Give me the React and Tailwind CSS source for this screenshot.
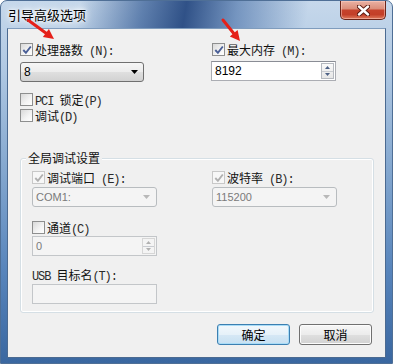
import React from "react";

function Lat({ children }) {
  return <span className="font-['Liberation_Mono',monospace] text-[12px] leading-[12px] tracking-[-1.1px] text-[#2a2a2a]">{children}</span>;
}

function Check({ checked, disabled }) {
  return (
    <span
      className={
        disabled
          ? "flex h-[13px] w-[13px] shrink-0 items-center justify-center border border-[#c8c8c8] bg-[#f7f7f7]"
          : "flex h-[13px] w-[13px] shrink-0 items-center justify-center border border-[#8e8f8f] bg-[linear-gradient(135deg,#d9d9d9_0%,#f4f4f4_60%,#ffffff_100%)]"
      }
    >
      {checked && (
        <svg width="10" height="10" viewBox="0 0 10 10">
          <path
            d="M1.3 5 L3.9 7.8 L8.8 1.5"
            fill="none"
            stroke={disabled ? "#b0b0b0" : "#4a5f97"}
            strokeWidth="1.9"
          />
        </svg>
      )}
    </span>
  );
}

function CheckRow({ checked, disabled, children }) {
  return (
    <div className="flex h-[13px] items-center gap-[2px] whitespace-nowrap">
      <Check checked={checked} disabled={disabled} />
      <span className="block h-[13px] font-['Noto_Sans_CJK_SC',sans-serif] text-[12px] leading-[13px] text-[#111]">
        {children}
      </span>
    </div>
  );
}

function Arrow({ disabled }) {
  return (
    <svg width="7" height="4" viewBox="0 0 7 4">
      <path d="M0 0 H7 L3.5 4 Z" fill={disabled ? "#b8b8b8" : "#000"} />
    </svg>
  );
}

function Combo({ value, disabled }) {
  return (
    <div
      className={
        disabled
          ? "flex h-[20px] w-[125px] items-center justify-between rounded-[3px] border border-[#b8bcbf] bg-[#f4f4f4] pl-[3px] pr-[6px]"
          : "flex h-[20px] w-[124px] items-center justify-between rounded-[3px] border border-[#707070] bg-[linear-gradient(180deg,#f6f6f6_0%,#ececec_50%,#dfdfdf_51%,#d2d2d2_100%)] pl-[3px] pr-[5px]"
      }
    >
      <span
        className={
          disabled
            ? "font-['Liberation_Sans',sans-serif] text-[11px] text-[#7a7a7a]"
            : "font-['Liberation_Sans',sans-serif] text-[12px] text-black"
        }
      >
        {value}
      </span>
      <Arrow disabled={disabled} />
    </div>
  );
}

function Spinner({ disabled }) {
  const c = disabled ? "#b0b0b0" : "#4d6185";
  return (
    <div
      className={
        disabled
          ? "flex h-[16px] w-[13px] flex-col border border-[#d6d6d6] bg-[#f4f4f4]"
          : "flex h-[16px] w-[13px] flex-col border border-[#b5b9bf] bg-[linear-gradient(180deg,#fafafa,#e6e6e6)]"
      }
    >
      <div className="flex flex-1 items-center justify-center border-b border-[#c9ccd1]">
        <svg width="5" height="3" viewBox="0 0 5 3">
          <path d="M0 3 H5 L2.5 0 Z" fill={c} />
        </svg>
      </div>
      <div className="flex flex-1 items-center justify-center">
        <svg width="5" height="3" viewBox="0 0 5 3">
          <path d="M0 0 H5 L2.5 3 Z" fill={c} />
        </svg>
      </div>
    </div>
  );
}

function SpinInput({ value, disabled }) {
  return (
    <div
      className={
        disabled
          ? "flex h-[20px] w-[125px] items-center justify-between border border-[#c3c6c9] bg-[#f4f4f4] pl-[3px] pr-[1px]"
          : "flex h-[20px] w-[125px] items-center justify-between border border-[#abadb3] border-t-[#8a8d95] bg-white pl-[3px] pr-[1px]"
      }
    >
      <span
        className={
          disabled
            ? "font-['Liberation_Sans',sans-serif] text-[11px] text-[#7a7a7a]"
            : "font-['Liberation_Sans',sans-serif] text-[12px] text-black"
        }
      >
        {value}
      </span>
      <Spinner disabled={disabled} />
    </div>
  );
}

function CloseX() {
  return (
    <svg width="13" height="11" viewBox="0 0 13 11">
      <path d="M2 1.5 L11 9.5 M11 1.5 L2 9.5" stroke="#5a1a10" strokeWidth="4.4" strokeLinecap="round" />
      <path d="M2 1.5 L11 9.5 M11 1.5 L2 9.5" stroke="#ffffff" strokeWidth="2.4" strokeLinecap="round" />
    </svg>
  );
}

export default function App() {
  return (
    <div className="relative h-[364px] w-[393px] overflow-hidden rounded-t-[7px] border border-[#4f6f96] bg-[linear-gradient(180deg,#c6d8eb_0%,#b1c9e3_18%,#86a9d0_45%,#5784bb_75%,#3a67a0_100%)]">
      {/* title bar */}
      <div className="flex h-[27px] items-start justify-between bg-[linear-gradient(100deg,transparent_20%,rgba(30,72,135,0.6)_36%,rgba(22,58,118,0.85)_47%,rgba(40,85,150,0.5)_60%,transparent_78%)]">
        <div className="pl-[7px] pt-[5px] font-['Noto_Sans_CJK_SC',sans-serif] text-[13px] leading-[17px] text-black [text-shadow:0_0_6px_#fff,0_0_3px_#fff,0_0_10px_#fff]">
          引导高级选项
        </div>
        <div className="mr-[6px] flex h-[19px] w-[46px] items-center justify-center rounded-b-[5px] border border-t-0 border-[#6a2418] bg-[linear-gradient(180deg,#eab2a4_0%,#dc8f7b_42%,#c6432c_52%,#c33f28_75%,#df7a5c_100%)] shadow-[inset_0_0_0_1px_rgba(255,210,200,0.5)]">
          <CloseX />
        </div>
      </div>

      {/* client area */}
      <div className="ml-[6px] h-[330px] w-[379px] border border-[#4b6a91] border-t-[#7f9cbd] bg-[#f0f0f0]">
        {/* top section */}
        <div className="grid grid-cols-[191px_1fr] pl-[12px] pt-[14px]">
          <div className="flex flex-col">
            <CheckRow checked>
              处理器数<Lat> (N):</Lat>
            </CheckRow>
            <div className="mt-[6px]">
              <Combo value="8" />
            </div>
            <div className="mt-[11px]">
              <CheckRow>
                <Lat>PCI  </Lat>锁定<Lat>(P)</Lat>
              </CheckRow>
            </div>
            <div className="mt-[3px]">
              <CheckRow>
                调试<Lat>(D)</Lat>
              </CheckRow>
            </div>
          </div>
          <div className="flex flex-col pl-[1px]">
            <CheckRow checked>
              最大内存<Lat> (M):</Lat>
            </CheckRow>
            <div className="-ml-[1px] mt-[5px]">
              <SpinInput value="8192" />
            </div>
          </div>
        </div>

        {/* group box */}
        <div className="relative ml-[12px] mt-[36px] h-[155px] w-[354px] rounded-[3px] border border-[#d5dfe5] shadow-[inset_0_0_0_1px_#fff]">
          <div className="absolute left-[5px] top-[-8px] bg-[#f0f0f0] px-[2px] font-['Noto_Sans_CJK_SC',sans-serif] text-[12px] leading-[14px] text-[#111]">
            全局调试设置
          </div>
          <div className="grid grid-cols-[180px_1fr] pl-[11px] pt-[12px]">
            <div className="flex flex-col">
              <CheckRow checked disabled>
                调试端口<Lat> (E):</Lat>
              </CheckRow>
              <div className="mt-[3px]">
                <Combo value="COM1:" disabled />
              </div>
              <div className="mt-[14px]">
                <CheckRow>
                  通道<Lat>(C)</Lat>
                </CheckRow>
              </div>
              <div className="mt-[2px]">
                <SpinInput value="0" disabled />
              </div>
              <div className="mt-[12px] block h-[13px] whitespace-pre font-['Noto_Sans_CJK_SC',sans-serif] text-[12px] leading-[13px] text-[#111]">
                <Lat>USB </Lat>目标名<Lat>(T):</Lat>
              </div>
              <div className="mt-[3px] h-[20px] w-[125px] border border-[#c3c6c9] bg-[#f4f4f4]" />
            </div>
            <div className="flex flex-col">
              <CheckRow checked disabled>
                波特率<Lat> (B):</Lat>
              </CheckRow>
              <div className="mt-[3px]">
                <Combo value="115200" disabled />
              </div>
            </div>
          </div>
        </div>

        {/* buttons */}
        <div className="mt-[11px] flex justify-end gap-[9px] pr-[13px]">
          <div className="flex h-[21px] w-[73px] items-center justify-center rounded-[3px] border border-[#3c7fb1] bg-[linear-gradient(180deg,#f2f8fc_0%,#e6f1f9_50%,#d6e8f5_51%,#c7e0f2_100%)] shadow-[inset_0_0_0_1px_#a9dcf7] font-['Noto_Sans_CJK_SC',sans-serif] text-[12px] text-black">
            确定
          </div>
          <div className="flex h-[21px] w-[73px] items-center justify-center rounded-[3px] border border-[#707070] bg-[linear-gradient(180deg,#f6f6f6_0%,#ececec_50%,#dfdfdf_51%,#d2d2d2_100%)] shadow-[inset_0_0_0_1px_#fcfcfc] font-['Noto_Sans_CJK_SC',sans-serif] text-[12px] text-black">
            取消
          </div>
        </div>
      </div>

      {/* red annotation arrows */}
      <svg className="pointer-events-none absolute left-0 top-0" width="393" height="364">
        <line x1="27" y1="19" x2="45.5" y2="32.5" stroke="#e52019" strokeWidth="3" strokeLinecap="round" />
        <polygon points="53,38 41.9,36.1 47.9,28.1" fill="#e52019" />
        <line x1="222" y1="19" x2="233" y2="32.8" stroke="#e52019" strokeWidth="3" strokeLinecap="round" />
        <polygon points="239,40 228.8,35.4 236.6,29.1" fill="#e52019" />
      </svg>
    </div>
  );
}
